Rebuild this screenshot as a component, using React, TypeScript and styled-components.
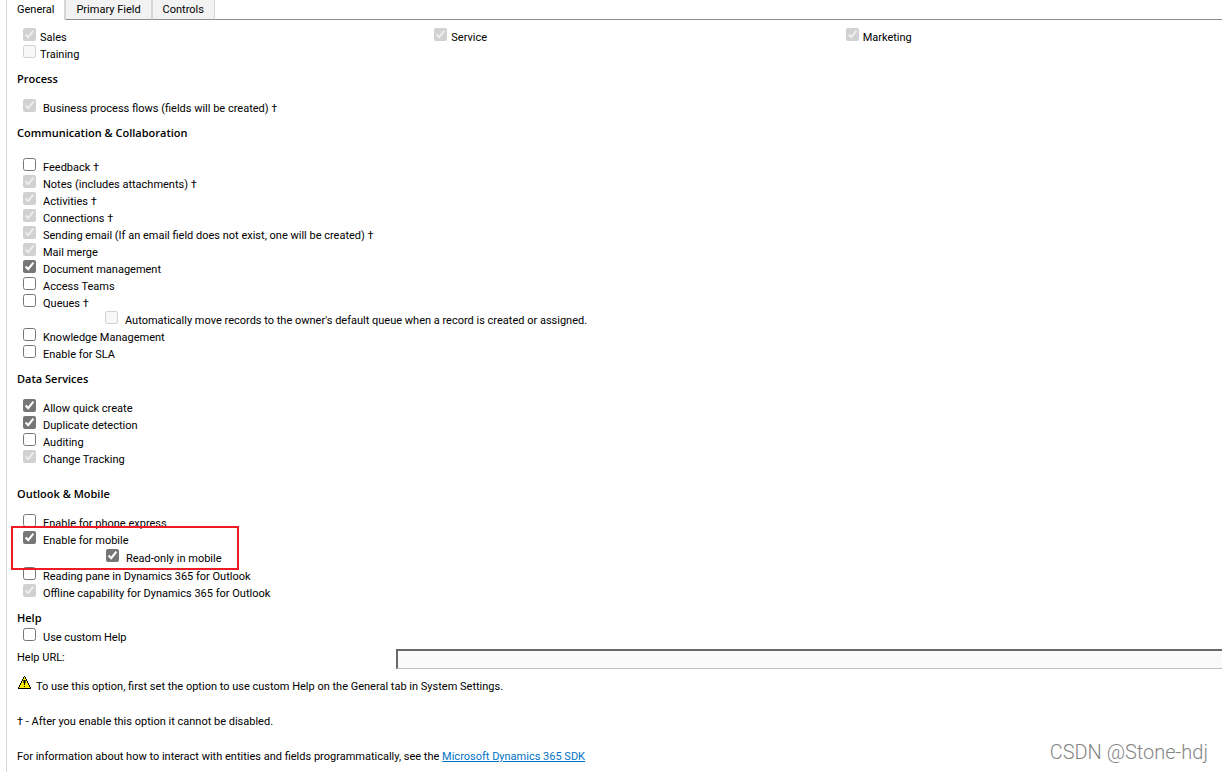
import React, { useId, useState } from 'react';
import styled, { createGlobalStyle } from 'styled-components';

const GlobalStyle = createGlobalStyle`
  * { box-sizing: border-box; }
  body {
    margin: 0;
    background: #fff;
    color: #000;
    font: 11px/17px 'Segoe UI', Roboto, sans-serif;
  }
`;

const Page = styled.div`
  position: relative;
  min-height: 100vh;
  padding-left: 6px;
  overflow: hidden;
`;

const Panel = styled.main`
  min-height: 100vh;
  border-left: 1px solid #d6d6d6;
`;

const TabBar = styled.nav`
  display: flex;
  height: 20px;
`;

const Tab = styled.button<{ $active?: boolean }>`
  height: 20px;
  padding: 0 10px;
  border: 0 solid #d6d6d6;
  border-width: 0 1px 1px ${(p) => (p.$active ? 0 : 1)}px;
  border-bottom-color: ${(p) => (p.$active ? '#fff' : '#8c8c91')};
  background: ${(p) => (p.$active ? '#fff' : '#f2f2f2')};
  color: #000;
  font: inherit;
`;

const TabFill = styled.div`
  flex: 1;
  border-bottom: 1px solid #8c8c91;
`;

/* The form is wider than the window and is clipped at the right edge. */
const Form = styled.div`
  margin-right: -29px;
  padding: 8px 0 7px 10px;
`;

const AreaGrid = styled.div`
  display: grid;
  grid-template-columns: repeat(3, 1fr);
`;

const Heading = styled.h2<{ $before?: number; $after?: number }>`
  margin: ${(p) => p.$before ?? 8}px 0 ${(p) => p.$after ?? 12}px;
  font-family: 'Segoe UI', 'Open Sans', sans-serif;
  font-size: 11px;
  font-weight: 600;
  line-height: 17px;
`;

const Row = styled.div<{ $indent: number; $tight?: boolean }>`
  display: flex;
  align-items: flex-start;
  gap: ${(p) => (p.$tight ? 4 : 7)}px;
  height: 17px;
  padding-left: ${(p) => p.$indent}px;
`;

const Box = styled.input`
  flex: none;
  width: 13px;
  height: 13px;
  margin: 0;
  accent-color: #767676;
`;

const BoxLabel = styled.label`
  padding-top: 3px;
  line-height: 14px;
  white-space: nowrap;
`;

const MobileGroup = styled.div`
  position: relative;
  display: grid;
  gap: 1px;
  padding-bottom: 1px;
`;

const Highlight = styled.div`
  position: absolute;
  top: -5px;
  left: -6px;
  width: 228px;
  height: 44px;
  border: 2px solid #ed1c24;
  pointer-events: none;
`;

const UrlRow = styled.div`
  display: flex;
  align-items: flex-start;
  margin-top: 4px;
`;

const UrlLabel = styled.label`
  flex: none;
  width: 379px;
`;

const UrlInput = styled.input`
  flex: 1;
  height: 20px;
  border: solid #6b6867;
  border-width: 2px 1px 1px 2px;
  border-bottom-color: #c0c0c0;
  background: #fafafa;
  font: inherit;
`;

const Notice = styled.p`
  display: flex;
  align-items: flex-start;
  gap: 4px;
  margin: 7px 0 18px;
`;

const NoticeText = styled.span`
  padding-top: 2px;
`;

const Note = styled.p`
  margin: 0 0 18px;
  &:last-child { margin-bottom: 0; }
`;

const Link = styled.a`
  color: #0072c6;
`;

const Watermark = styled.div`
  position: absolute;
  right: 14px;
  bottom: 8px;
  color: #858585;
  font: 20px/24px Roboto, Arial, sans-serif;
  font-weight: 300;
`;

type Option = { label: string; on?: boolean; off?: boolean; indent?: number; tight?: boolean };

function Check({ label, on = false, off, indent = 6, tight }: Option) {
  const id = useId();
  return (
    <Row $indent={indent} $tight={tight}>
      <Box id={id} type="checkbox" defaultChecked={on} disabled={off} />
      <BoxLabel htmlFor={id}>{label}</BoxLabel>
    </Row>
  );
}

const areas: Option[] = [
  { label: 'Sales', on: true, off: true },
  { label: 'Service', on: true, off: true },
  { label: 'Marketing', on: true, off: true },
  { label: 'Training', off: true },
];

const communication: Option[] = [
  { label: 'Feedback †' },
  { label: 'Notes (includes attachments) †', on: true, off: true },
  { label: 'Activities †', on: true, off: true },
  { label: 'Connections †', on: true, off: true },
  { label: 'Sending email (If an email field does not exist, one will be created) †', on: true, off: true },
  { label: 'Mail merge', on: true, off: true },
  { label: 'Document management', on: true },
  { label: 'Access Teams' },
  { label: 'Queues †' },
  {
    label: "Automatically move records to the owner's default queue when a record is created or assigned.",
    off: true,
    indent: 88,
  },
  { label: 'Knowledge Management' },
  { label: 'Enable for SLA' },
];

const dataServices: Option[] = [
  { label: 'Allow quick create', on: true },
  { label: 'Duplicate detection', on: true },
  { label: 'Auditing' },
  { label: 'Change Tracking', on: true, off: true },
];

const WarningIcon = () => (
  <svg width="15" height="14" viewBox="0 0 15 14" aria-hidden="true" shapeRendering="crispEdges">
    <path d="M7 0h1v1h1v2h1v2h1v2h1v2h1v2h1v2H1v-2h1V9h1V7h1V5h1V3h1V1h1z" fill="#000" />
    <path d="M7 1h1v2h1v2h1v2h1v2h1v2h1v1H2v-1h1V9h1V7h1V5h1V3h1z" fill="#ffed00" />
    <path d="M6 4h3v3H6z" fill="#6b6300" />
    <path d="M7 4h1v5H7zM7 10h1v1H7z" fill="#000" />
  </svg>
);

export default function App() {
  const [tab, setTab] = useState('General');
  return (
    <>
      <GlobalStyle />
      <Page>
        <Panel>
          <TabBar>
            {['General', 'Primary Field', 'Controls'].map((name) => (
              <Tab key={name} type="button" $active={name === tab} onClick={() => setTab(name)}>
                {name}
              </Tab>
            ))}
            <TabFill />
          </TabBar>
          <Form>
            <AreaGrid>
              {areas.map((o) => <Check key={o.label} {...o} tight />)}
            </AreaGrid>

            <Heading>Process</Heading>
            <Check label="Business process flows (fields will be created) †" on off />

            <Heading $after={17}>Communication &amp; Collaboration</Heading>
            {communication.map((o) => <Check key={o.label} {...o} />)}

            <Heading>Data Services</Heading>
            {dataServices.map((o) => <Check key={o.label} {...o} />)}

            <Heading $before={18}>Outlook &amp; Mobile</Heading>
            <Check label="Enable for phone express" />
            <MobileGroup>
              <Check label="Enable for mobile" on />
              <Check label="Read-only in mobile" on indent={89} />
              <Highlight />
            </MobileGroup>
            <Check label="Reading pane in Dynamics 365 for Outlook" />
            <Check label="Offline capability for Dynamics 365 for Outlook" on off />

            <Heading $after={2}>Help</Heading>
            <Check label="Use custom Help" />
            <UrlRow>
              <UrlLabel htmlFor="help-url">Help URL:</UrlLabel>
              <UrlInput id="help-url" type="text" readOnly />
            </UrlRow>
            <Notice>
              <WarningIcon />
              <NoticeText>
                To use this option, first set the option to use custom Help on the General tab in System Settings.
              </NoticeText>
            </Notice>
            <Note>† - After you enable this option it cannot be disabled.</Note>
            <Note>
              For information about how to interact with entities and fields programmatically, see the{' '}
              <Link href="#sdk">Microsoft Dynamics 365 SDK</Link>
            </Note>
          </Form>
        </Panel>
        <Watermark>CSDN @Stone-hdj</Watermark>
      </Page>
    </>
  );
}
